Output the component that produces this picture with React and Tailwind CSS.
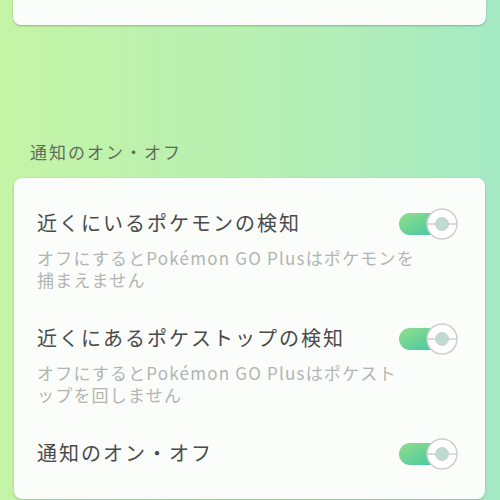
function Toggle() {
  return (
    <svg width="62" height="40" viewBox="0 0 62 40" className="shrink-0">
      <defs>
        <linearGradient id="trk" x1="0" y1="0" x2="1" y2="1">
          <stop offset="0" stopColor="#93de8a" />
          <stop offset="1" stopColor="#3fc7a3" />
        </linearGradient>
      </defs>
      <rect x="2" y="9" width="42" height="22" rx="11" fill="url(#trk)" />
      <circle cx="45" cy="20" r="15" fill="#ffffff" stroke="#cfcfcf" strokeWidth="1.5" />
      <line x1="30" y1="20" x2="60" y2="20" stroke="#cfcfcf" strokeWidth="1.5" />
      <circle cx="45" cy="20" r="6.5" fill="#bddccf" stroke="#cfcfcf" strokeWidth="1" />
    </svg>
  );
}

function Row({ title, sub, last }) {
  return (
    <div className={last ? "" : "mb-[33px]"}>
      <div className="flex items-center justify-between">
        <div className="text-[20px] leading-[28px] tracking-[2px] text-[#4a4a4a]">{title}</div>
        <div className="-my-[6px] translate-y-[1px]">
          <Toggle />
        </div>
      </div>
      {sub && (
        <div className="mt-[10px] text-[17px] leading-[22px] tracking-[1.2px] text-[#b2b5b2] whitespace-nowrap">
          {sub.map((line, i) => (
            <div key={i}>{line}</div>
          ))}
        </div>
      )}
    </div>
  );
}

export default function App() {
  return (
    <div
      className="w-[500px] h-[500px] overflow-hidden bg-gradient-to-r from-[#c4f4a6] via-[#b8f0b2] to-[#a5eac4]"
      style={{ fontFamily: '"Noto Sans CJK JP", "Noto Sans", sans-serif' }}
    >
      {/* top card (cut off) */}
      <div className="mx-[13px] w-[473px] h-[25px] bg-[#fbfdfa] rounded-b-lg shadow-[0_1px_2px_rgba(0,0,0,0.25)]" />

      <div className="mt-[115px] pl-[30px] text-[17px] leading-[24px] tracking-[2px] text-[#5d6d5c]">
        通知のオン・オフ
      </div>

      <div className="mt-[14px] ml-[14px] w-[471px] bg-[#fbfdfa] rounded-lg shadow-[0_1px_3px_rgba(0,0,0,0.2)] pl-[23px] pr-[26px] pt-[31px] pb-[32px]">
        <Row
          title="近くにいるポケモンの検知"
          sub={["オフにするとPokémon GO Plusはポケモンを", "捕まえません"]}
        />
        <Row
          title="近くにあるポケストップの検知"
          sub={["オフにするとPokémon GO Plusはポケスト", "ップを回しません"]}
        />
        <Row title="通知のオン・オフ" last />
      </div>
    </div>
  );
}
